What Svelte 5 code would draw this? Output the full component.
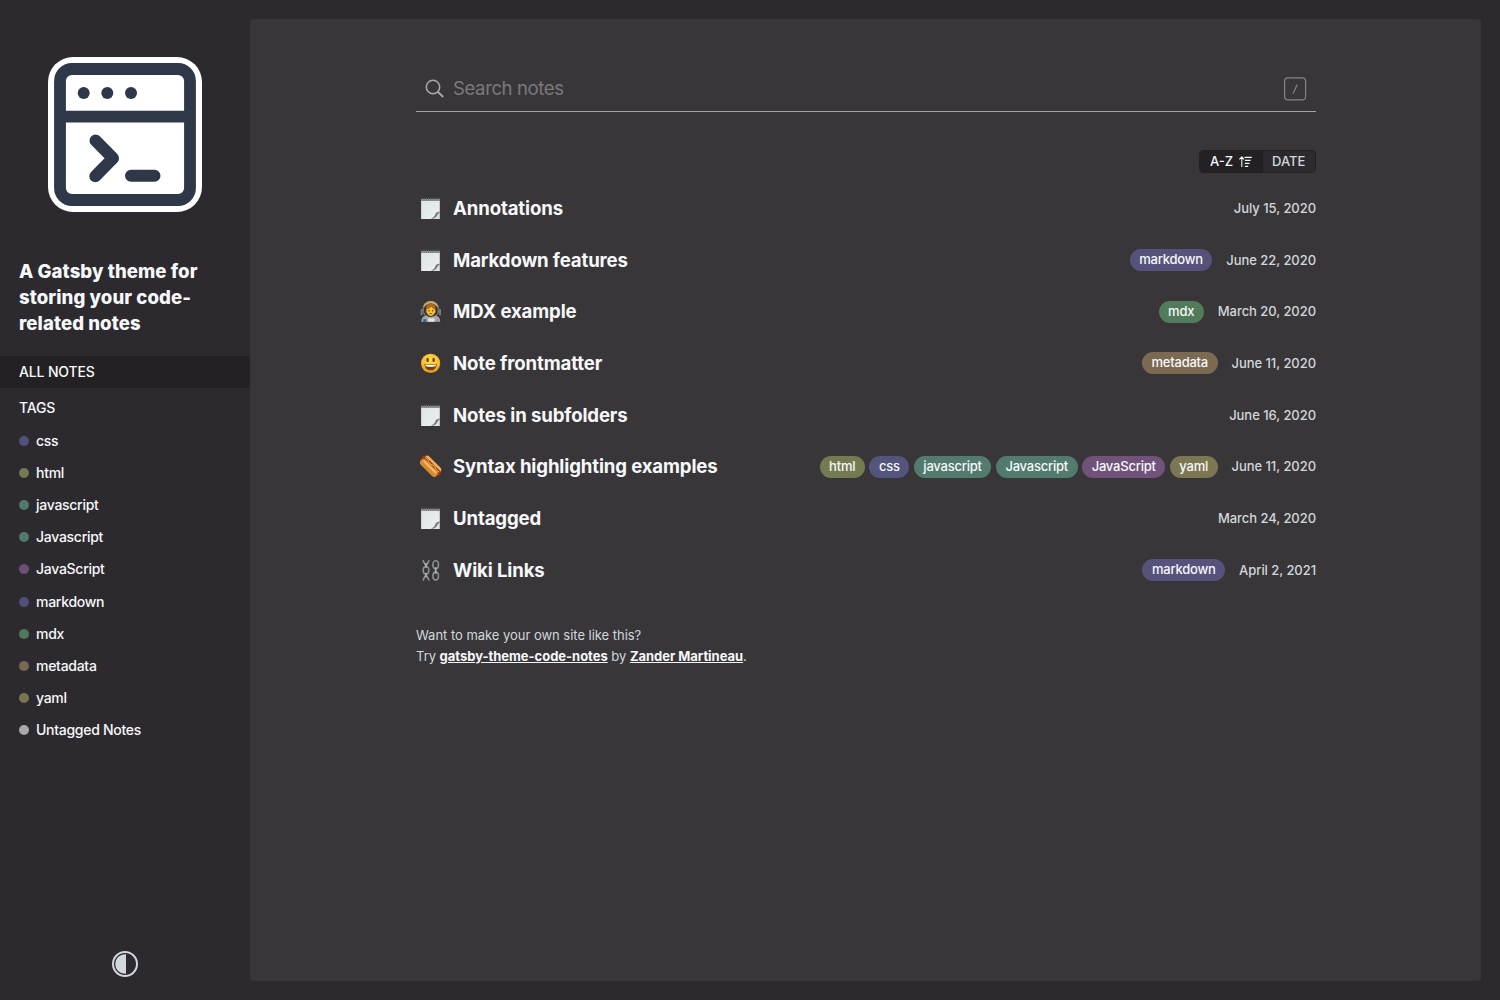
<script>
  const tags = [
    ['css', '#515179'],
    ['html', '#74794f'],
    ['javascript', '#4f796c'],
    ['Javascript', '#4f796c'],
    ['JavaScript', '#6c4f79'],
    ['markdown', '#514f79'],
    ['mdx', '#4f7957'],
    ['metadata', '#79684f'],
    ['yaml', '#79754f'],
    ['Untagged Notes', '#aaa9aa'],
  ];
  const pill = {
    html: '#747b52',
    css: '#53557d',
    javascript: '#527b6e',
    Javascript: '#527b6e',
    JavaScript: '#71527b',
    yaml: '#7b7752',
    markdown: '#56527b',
    mdx: '#527b5b',
    metadata: '#7b6a52',
  };
  const notes = [
    { title: 'Annotations', icon: 'pad', tags: [], date: 'July 15, 2020' },
    { title: 'Markdown features', icon: 'pad', tags: ['markdown'], date: 'June 22, 2020' },
    { title: 'MDX example', icon: 'astronaut', tags: ['mdx'], date: 'March 20, 2020' },
    { title: 'Note frontmatter', icon: 'smile', tags: ['metadata'], date: 'June 11, 2020' },
    { title: 'Notes in subfolders', icon: 'pad', tags: [], date: 'June 16, 2020' },
    { title: 'Syntax highlighting examples', icon: 'hotdog', tags: ['html', 'css', 'javascript', 'Javascript', 'JavaScript', 'yaml'], date: 'June 11, 2020' },
    { title: 'Untagged', icon: 'pad', tags: [], date: 'March 24, 2020' },
    { title: 'Wiki Links', icon: 'chains', tags: ['markdown'], date: 'April 2, 2021' },
  ];
</script>

<svg class="defs" width="0" height="0" aria-hidden="true">
  <defs>
    <linearGradient id="paper" x1="0" y1="0" x2="1" y2="1">
      <stop offset="0" stop-color="#dfe3e6" /><stop offset="1" stop-color="#eef0f1" />
    </linearGradient>
    <radialGradient id="face" cx=".5" cy=".35" r=".65">
      <stop offset="0" stop-color="#ffe04a" /><stop offset=".65" stop-color="#fcc02c" /><stop offset="1" stop-color="#e88a14" />
    </radialGradient>
  </defs>
</svg>

<div class="page">
  <aside>
    <svg class="logo" viewBox="0 0 154 155">
      <rect width="154" height="155" rx="25" fill="#fff" />
      <rect x="12" y="12" width="130" height="131" rx="12" fill="none" stroke="#2f3848" stroke-width="11.8" />
      <path d="M12 59.6H142" stroke="#2f3848" stroke-width="11.8" />
      <g fill="#2f3848"><circle cx="35.7" cy="36" r="6" /><circle cx="59.3" cy="36" r="6" /><circle cx="83" cy="36" r="6" /></g>
      <path d="M47.5 83.5L65 101.3L47.3 119.2M83 118.8H106.5" fill="none" stroke="#2f3848" stroke-width="12" stroke-linecap="round" stroke-linejoin="round" />
    </svg>
    <h1>A Gatsby theme for storing your code-related notes</h1>
    <a class="all">ALL NOTES</a>
    <div class="head">TAGS</div>
    <ul class="tags">
      {#each tags as [name, color]}
        <li><i style:background={color}></i><span>{name}</span></li>
      {/each}
    </ul>
    <svg class="mode" viewBox="0 0 26 26">
      <circle cx="13" cy="13" r="12" fill="none" stroke="#d1d8dc" stroke-width="2" />
      <path d="M14 3.2V22.8H13A9.8 9.8 0 0 1 13 3.2Z" fill="#d1d8dc" />
    </svg>
  </aside>

  <main>
    <div class="content">
      <div class="search">
        <svg viewBox="0 0 20 20" width="20" height="20" fill="none" stroke="#a9a9ae">
          <circle cx="8" cy="8" r="6.7" stroke-width="1.5" />
          <path d="M12.9 12.9L18.2 18" stroke-width="2" />
        </svg>
        <span class="ph">Search notes</span>
        <svg width="23" height="24" viewBox="0 0 23 24" fill="none" stroke="#848285">
          <rect x=".6" y=".9" width="21" height="22" rx="3.5" stroke-width="1.2" />
          <path d="M13.2 7.6L9 16.7" stroke-width="1.2" />
        </svg>
      </div>

      <div class="sort">
        <span class="on">A-Z
          <svg width="13" height="12" viewBox="0 0 13 12" fill="none" stroke="#f4f5f7" stroke-width="1.1">
            <path d="M2.8 11V1M.4 3.3L2.8 .9L5 3.3M5.5 1.4H12.8M5.8 4.4H11.6M5.8 7.4H10.5M5.8 10.4H9.2" />
          </svg>
        </span>
        <span class="off">DATE</span>
      </div>

      <div class="list">
        {#each notes as note}
          <div class="row">
            <svg class="emoji" viewBox="0 0 22 24">
              {#if note.icon === 'pad'}
                <path d="M1.1 3H19.8V16L14 22.9H1.1Z" fill="url(#paper)" />
                <path d="M19.8 15.8V22.9H11.5Z" fill="#dde1e3" />
                <path d="M19.8 15.5C17 16 15.3 16.8 15.2 18.8C14.5 20.6 12.5 22 10.8 22.8C15 22.5 16.5 20.8 17.2 19.2C17.8 17.9 18.6 17 19.8 16.4Z" fill="#747b80" />
                <path d="M1.1 4H19.8" stroke="#8b9093" stroke-width="1.8" />
                <path d="M2.2 1.8V4.8M4.3 1.8V4.8M6.4 1.8V4.8M8.5 1.8V4.8M10.6 1.8V4.8M12.7 1.8V4.8M14.8 1.8V4.8M16.9 1.8V4.8M19 1.8V4.8" stroke="#6d7174" stroke-width=".9" />
              {:else if note.icon === 'smile'}
                <circle cx="10.6" cy="12.4" r="9.6" fill="url(#face)" />
                <ellipse cx="7.6" cy="8.9" rx="1.2" ry="2.2" fill="#6b3a0d" /><ellipse cx="13.6" cy="8.9" rx="1.2" ry="2.2" fill="#6b3a0d" />
                <path d="M4.4 12.9Q10.6 14.2 16.8 12.9C16.4 17 14.2 19.2 10.6 19.2S4.8 17 4.4 12.9Z" fill="#744212" />
                <path d="M5.1 13.4Q10.6 14.6 16.1 13.4L15.4 15.3Q10.6 16.4 5.8 15.3Z" fill="#fff" />
              {:else if note.icon === 'astronaut'}
                <circle cx="10.8" cy="10.6" r="8.6" fill="#77746e" />
                <path d="M2.9 8C4.2 4.2 7 2 10.8 2S17.4 4.2 18.7 8Q10.8 4.6 2.9 8Z" fill="#c9a56c" />
                <circle cx="10.8" cy="11.4" r="6.9" fill="#333231" />
                <path d="M6 9Q6.6 4.8 10.8 4.8T15.6 9L16 13.5H5.6Z" fill="#a86e1c" />
                <ellipse cx="10.8" cy="12" rx="4.2" ry="5" fill="#f9c631" />
                <path d="M6.6 10.6Q7 6.4 10.8 6.4T15 10.6Q12.6 9.8 11.2 7.8Q9.6 9.8 6.6 10.6Z" fill="#a86e1c" />
                <circle cx="9" cy="11.8" r=".75" fill="#493015" /><circle cx="12.6" cy="11.8" r=".75" fill="#493015" />
                <path d="M9.2 14.7H12.4" stroke="#a3451d" stroke-width="1" />
                <path d="M1.4 22.7C1.4 18.6 3.8 17.2 6.2 16.6Q10.8 19.2 15.4 16.6C17.8 17.2 20.2 18.6 20.2 22.7Z" fill="#a4aab3" />
                <path d="M3.2 20.2H6.4V22.7H3.2Z" fill="#365a9d" /><path d="M8 19.4H14.5V22.7H8Z" fill="#e2e5e8" /><path d="M16.4 20.4H18V21.6H16.4Z" fill="#d95249" />
                <path d="M1.6 11V15.6M20 11V15.6" stroke="#777b80" stroke-width="2" stroke-linecap="round" />
              {:else if note.icon === 'hotdog'}
                <g transform="rotate(45 10.5 12.4)">
                  <rect x="-.6" y="6.2" width="22" height="7" rx="3.5" fill="#f0b35c" />
                  <rect x="-2.2" y="8.8" width="25.4" height="5.2" rx="2.6" fill="#9c351c" />
                  <path d="M.5 10.2Q3 8.6 5.5 10.2T10.5 10.2T15.5 10.2T20.5 10.2" fill="none" stroke="#f0a23a" stroke-width="1" />
                  <rect x="-.8" y="11" width="22.4" height="7.2" rx="3.6" fill="#d88a30" />
                  <path d="M2.4 13.2H18.4" stroke="#f5be6b" stroke-width="2" stroke-linecap="round" />
                </g>
              {:else}
                <g fill="none" stroke="#8b9093" stroke-width="1.6">
                  <path d="M2.9 2.2L5 6.4H7L9.2 2.2M2.9 22.6L5 18.2H7L9.2 22.6" />
                  <ellipse cx="6" cy="12.3" rx="2.8" ry="3.8" />
                  <ellipse cx="15.7" cy="6.7" rx="2.8" ry="3.9" /><ellipse cx="15.7" cy="18" rx="2.8" ry="3.9" />
                </g>
                <path d="M6 5V9.8M6 15V19.5M15.7 9.2V15.7" stroke="#b5babd" stroke-width="1.5" />
              {/if}
            </svg>
            <span class="title">{note.title}</span>
            <div class="pills">
              {#each note.tags as tag}
                <span class="pill" style:background={pill[tag]}>{tag}</span>
              {/each}
            </div>
            <span class="date">{note.date}</span>
          </div>
        {/each}
      </div>

      <footer>
        Want to make your own site like this?<br />
        Try <a>gatsby-theme-code-notes</a> by <a>Zander Martineau</a>.
      </footer>
    </div>
  </main>
</div>

<style>
  :global(body) { margin: 0; background: #2d2a2f; }
  .defs { display: block; height: 0; }
  .page {
    display: flex;
    box-sizing: border-box;
    width: 1500px;
    height: 1000px;
    padding: 19px 19px 19px 0;
    font-family: Inter, "Liberation Sans", sans-serif;
    color: #f7f8fa;
  }
  aside { width: 250px; display: flex; flex-direction: column; }
  .logo { width: 154px; height: 155px; margin: 38px 48px 46px; flex: none; }
  h1 { margin: 0 19px 20px; width: 200px; font-size: 18.6px; line-height: 26px; font-weight: 800; letter-spacing: .07px; }
  .all, .head { padding-left: 19px; font-size: 14px; font-weight: 500; line-height: 32px; letter-spacing: -.15px; }
  .all { background: #232124; }
  .head { margin-top: 4px; }
  ul { list-style: none; margin: 1px 0 0; padding: 0; }
  li { display: flex; align-items: center; height: 32.12px; padding-left: 19px; gap: 7px; font-size: 14px; font-weight: 500; letter-spacing: -.28px; }
  li i { width: 10px; height: 10px; border-radius: 50%; }
  li span { padding-bottom: 1px; }
  .mode { width: 26px; height: 26px; margin: auto auto 4px 112px; }
  main { flex: 1; background: #393639; border-radius: 4px; }
  .content { width: 900px; margin: 0 auto 0 166px; padding-top: 48px; }
  .search { display: flex; align-items: center; box-sizing: border-box; height: 45px; padding: 0 9px 0 9px; border-bottom: 1px solid #a3a2a5; }
  .ph { flex: 1; margin-left: 8px; padding-bottom: 2px; font-size: 18.6px; letter-spacing: -.42px; color: #7b797c; }
  .sort { display: flex; width: 117px; height: 23px; box-sizing: border-box; margin: 38px 0 9px auto; border: 1px solid #222024; border-radius: 4px; overflow: hidden; font-size: 13px; line-height: 21px; font-weight: 500; }
  .on { display: flex; align-items: center; gap: 6px; box-sizing: border-box; width: 63px; padding-left: 10px; background: #232124; border-right: 1px solid #1f1d20; }
  .off { flex: 1; padding-left: 9px; background: #2d2a2f; color: #d1d8dc; }
  .row { display: flex; align-items: center; height: 51.7px; }
  .emoji { width: 22px; height: 24px; margin: 0 11px 0 4px; flex: none; }
  .title { font-size: 18.6px; font-weight: 700; letter-spacing: -.13px; white-space: nowrap; }
  .pills { display: flex; gap: 4.6px; margin: 1px 0 0 auto; }
  .pill { height: 22px; line-height: 21px; padding: 0 9.5px; border-radius: 11px; font-size: 13px; font-weight: 500; letter-spacing: -.22px; }
  .date { margin-left: 14px; font-size: 13px; font-weight: 500; letter-spacing: -.05px; color: #d1d8dc; white-space: nowrap; }
  footer { margin-top: 29px; font-size: 13px; line-height: 21px; letter-spacing: -.03px; color: #d1d8dc; }
  footer a { color: #f7f8fa; font-weight: 700; text-decoration: underline; }
</style>
